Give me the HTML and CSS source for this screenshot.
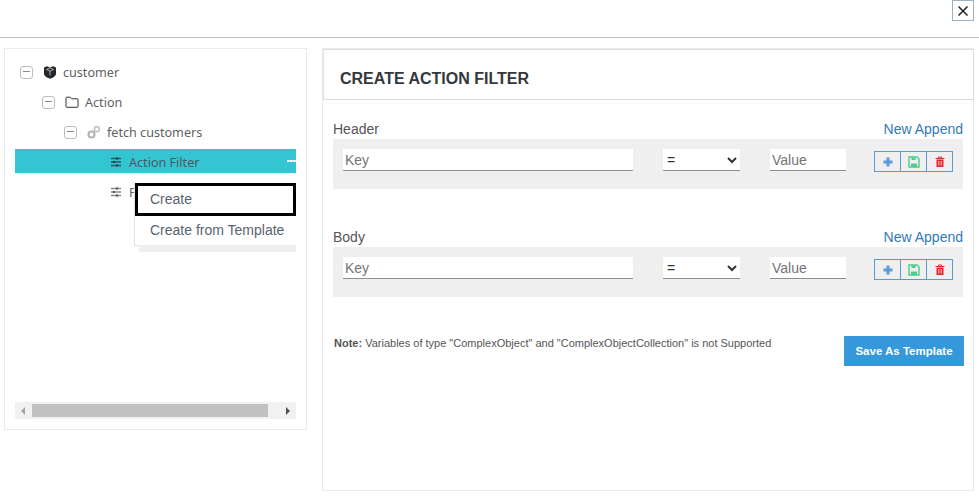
FILE: index.html
```html
<!doctype html>
<html>
<head>
<meta charset=utf-8>
<title>Create Action Filter</title>
<link rel="stylesheet" href="styles.css">
</head>

<body>

<header class="topbar">
  <button class="close" aria-label="close">
    <svg width="12" height="12" viewBox="0 0 12 12"><path d="M1.500 1.500l9 9M10.500 1.500l-9 9" stroke="#222" stroke-width="1.500" fill="none"/></svg>
  </button>
</header>

<main class="content">

<section class="tree-panel">
  <ul class="tree">
    <li class="node depth-0">
      <span class="toggle"></span>
      <svg class="icon" width="14" height="14" viewBox="0 0 14 14"><path d="M4 1.200L7 2.500l3-1.300 3 1.300v7L11 12l-4 1.800L3 12 1 9.500v-7z" fill="#23272b"/><path d="M3.500 4.500L7 6.200l3.500-1.700M7 6.200v4.300M3.500 4.500l3.500-1.500 3.500 1.500" stroke="#cfd2d4" stroke-width=".8" fill="none"/></svg>
      customer
    </li>
    <li class="node depth-1">
      <span class="toggle"></span>
      <svg class="icon" width="14" height="14" viewBox="0 0 14 14"><path d="M1 11.500V3a.800.800 0 0 1 .800-.800h3.400l1.300 1.600h5.700a.800.800 0 0 1 .800.800v6.900a.800.800 0 0 1-.800.800H1.800a.800.800 0 0 1-.800-.800z" fill="none" stroke="#333" stroke-width="1"/></svg>
      Action
    </li>
    <li class="node depth-2">
      <span class="toggle"></span>
      <svg class="icon" width="14" height="14" viewBox="0 0 14 14"><circle cx="4.500" cy="9.500" r="3" fill="none" stroke="#b5b5b5" stroke-width="2.200"/><circle cx="9.800" cy="4.200" r="2.500" fill="none" stroke="#c8c8c8" stroke-width="1.800"/></svg>
      fetch customers
    </li>
    <li class="node depth-3 selected">
      <svg class="icon slider" width="10" height="10" viewBox="0 0 10 10"><path d="M0 1.500h10M0 5h10M0 8.500h10" stroke="#2f5560" stroke-width="1.300"/><path d="M6 .500v2M3 4v2M6 7.500v2" stroke="#1d3b44" stroke-width="2"/></svg>
      Action Filter
      <span class="dots"></span>
    </li>
    <li class="node depth-3">
      <svg class="icon slider" width="10" height="10" viewBox="0 0 10 10"><path d="M0 1.500h10M0 5h10M0 8.500h10" stroke="#888" stroke-width="1.300"/><path d="M6 .500v2M3 4v2M6 7.500v2" stroke="#555" stroke-width="2"/></svg>
      F
    </li>
  </ul>

  <div class="context-menu">
    <div class="menu-item active">Create</div>
    <div class="menu-item">Create from Template</div>
  </div>

  <div class="scrollbar">
    <span class="arrow left"></span>
    <span class="thumb"></span>
    <span class="arrow right"></span>
  </div>
</section>

<section class="form-panel">
  <div class="form-title"><h2>CREATE ACTION FILTER</h2></div>

  <div class="form-body">
    <div class="group header-group">
      <div class="group-head"><span>Header</span><a href="#">New Append</a></div>
      <div class="field-row">
        <input class="key" placeholder="Key">
        <select class="op"><option>=</option></select>
        <input class="value" placeholder="Value">
        <div class="actions">
          <button><svg width="12" height="12" viewBox="0 0 12 12"><path d="M6 1.500v9M1.500 6h9" stroke="#5b9bd5" stroke-width="3"/></svg></button>
          <button><svg width="12" height="12" viewBox="0 0 12 12"><path d="M1 1h8l2 2v8H1z" fill="none" stroke="#4ecb8f" stroke-width="1.400"/><path d="M3.500 1.500h4v2.500h-4zM3 7.500h6V11H3z" fill="#4ecb8f"/></svg></button>
          <button><svg width="12" height="12" viewBox="0 0 12 12"><path d="M1.500 2.500h9M4.500 2V1h3v1" stroke="#e0282e" fill="none"/><path d="M2.500 3.500h7V11h-7z" fill="#e0282e"/><path d="M4.500 5v4.500M6 5v4.500M7.500 5v4.500" stroke="#fbb" stroke-width=".7"/></svg></button>
        </div>
      </div>
    </div>

    <div class="group body-group">
      <div class="group-head"><span>Body</span><a href="#">New Append</a></div>
      <div class="field-row">
        <input class="key" placeholder="Key">
        <select class="op"><option>=</option></select>
        <input class="value" placeholder="Value">
        <div class="actions">
          <button><svg width="12" height="12" viewBox="0 0 12 12"><path d="M6 1.500v9M1.500 6h9" stroke="#5b9bd5" stroke-width="3"/></svg></button>
          <button><svg width="12" height="12" viewBox="0 0 12 12"><path d="M1 1h8l2 2v8H1z" fill="none" stroke="#4ecb8f" stroke-width="1.400"/><path d="M3.500 1.500h4v2.500h-4zM3 7.500h6V11H3z" fill="#4ecb8f"/></svg></button>
          <button><svg width="12" height="12" viewBox="0 0 12 12"><path d="M1.500 2.500h9M4.500 2V1h3v1" stroke="#e0282e" fill="none"/><path d="M2.500 3.500h7V11h-7z" fill="#e0282e"/><path d="M4.500 5v4.500M6 5v4.500M7.500 5v4.500" stroke="#fbb" stroke-width=".7"/></svg></button>
        </div>
      </div>
    </div>

    <div class="form-foot">
      <p class="note"><strong>Note:</strong> Variables of type "ComplexObject" and "ComplexObjectCollection" is not Supported</p>
      <button class="save">Save As Template</button>
    </div>
  </div>
</section>

</main>
</body>
</html>
```

FILE: styles.css
```css
* {
  box-sizing: border-box;
}

body {
  margin: 0;
  height: 502px;
  overflow: hidden;
  background: #fff;
  font-family: "Liberation Sans", sans-serif;
  font-size: 14px;
  color: #555;
}

.topbar {
  height: 38px;
  border-bottom: 1px solid #bcbcbc;
  display: flex;
  justify-content: flex-end;
  align-items: flex-start;
  padding-right: 5px;
}

.close {
  width: 22px;
  height: 21px;
  padding: 0;
  background: #fff;
  border: 1px solid #9fb0bf;
  display: flex;
  align-items: center;
  justify-content: center;
}

.content {
  display: flex;
  align-items: flex-start;
  padding: 10px 0 0 4px;
}

/* left tree */
.tree-panel {
  position: relative;
  width: 303px;
  height: 382px;
  border: 1px solid #e6ebf0;
  padding: 8px 10px 0;
  display: flex;
  flex-direction: column;
}

.tree {
  list-style: none;
  margin: 0;
  padding: 0;
  flex: 1;
  font-family: "Noto Sans", sans-serif;
  font-size: 12.600px;
  color: #5f5f5f;
}

.node {
  height: 30px;
  display: flex;
  align-items: center;
  white-space: nowrap;
}

.depth-0 { padding-left: 5px; }
.depth-1 { padding-left: 27px; }
.depth-2 { padding-left: 49px; }
.depth-3 { padding-left: 96px; }

.toggle {
  position: relative;
  width: 13px;
  height: 13px;
  border: 1.500px solid #bdbdbd;
  border-radius: 3px;
  margin-right: 10px;
}

.toggle::after {
  content: "";
  position: absolute;
  left: 2px;
  right: 2px;
  top: 4px;
  height: 1.500px;
  background: #8a8a8a;
}

.icon {
  margin-right: 6px;
  flex: none;
}

.icon.slider {
  margin-right: 8px;
}

.selected {
  position: relative;
  background: linear-gradient(#34c5d3, #34c5d3) 0 2px / 100% 24px no-repeat;
  color: #4a5a60;
}

.dots {
  position: absolute;
  right: 0;
  top: 13px;
  width: 9px;
  height: 2px;
  background: repeating-linear-gradient(90deg, #fff 0 2px, #c8f0f4 2px 3px);
}

.context-menu {
  position: absolute;
  left: 130px;
  top: 134px;
  width: 161px;
  background: #fff;
  box-shadow: -1px 1px 1px #e4e4e4;
  font-size: 14px;
  color: #59636e;
}

.context-menu::after {
  content: "";
  position: absolute;
  left: 4px;
  right: 0;
  top: 100%;
  height: 7px;
  background: #efefef;
}

.menu-item {
  height: 29px;
  line-height: 29px;
  padding-left: 15px;
}

.menu-item.active {
  height: 33px;
  line-height: 27px;
  border: 3px solid #000;
  padding-left: 12px;
}

.scrollbar {
  height: 17px;
  margin-bottom: 10px;
  background: #f1f1f1;
  display: flex;
  align-items: center;
  padding: 0 6px;
}

.thumb {
  flex: none;
  width: 236px;
  height: 13px;
  margin-left: 7px;
  background: #c1c1c1;
}

.arrow {
  flex: none;
  width: 0;
  height: 0;
  border-top: 4px solid transparent;
  border-bottom: 4px solid transparent;
}

.arrow.left {
  border-right: 4px solid #a3a3a3;
}

.arrow.right {
  border-left: 4px solid #505050;
  margin-left: 18px;
}

/* right form */
.form-panel {
  width: 652px;
  height: 443px;
  margin-left: 15px;
  border: 1px solid #e6ebf0;
}

.form-title {
  height: 51px;
  border: 1px solid #dcdcdc;
  border-left-color: #e3e3e3;
  padding: 0 16px;
  margin-right: -1px;
  display: flex;
  align-items: center;
}

.form-title h2 {
  margin: 8px 0 0;
  font-size: 16px;
  font-weight: bold;
  color: #33383d;
}

.form-body {
  padding: 0 10px;
}

.group-head {
  height: 39px;
  display: flex;
  justify-content: space-between;
  align-items: flex-end;
  padding-bottom: 2px;
  line-height: 16px;
}

.group-head a {
  color: #337ab7;
  text-decoration: none;
}

.body-group {
  margin-top: 19px;
}

.field-row {
  height: 50px;
  background: #efefef;
  padding: 10px 10px 0;
  display: flex;
  align-items: flex-start;
}

.field-row input,
.field-row select {
  height: 22px;
  background: #fff;
  border: 0;
  border-bottom: 1px solid #8f8f8f;
  font-family: "Liberation Sans", sans-serif;
  font-size: 14px;
  border-radius: 0;
  outline: none;
}

.field-row input {
  padding: 0 2px;
}

.key { width: 290px; }
.op { width: 77px; margin-left: 30px; color: #333; }
.value { width: 76px; margin-left: 30px; }

.actions {
  display: flex;
  margin: 2px 0 0 29px;
}

.actions button {
  width: 27px;
  height: 21px;
  padding: 0;
  margin-left: -1px;
  background: transparent;
  border: 1px solid #5b9bd5;
  display: flex;
  align-items: center;
  justify-content: center;
}

.form-foot {
  display: flex;
  justify-content: space-between;
  align-items: flex-start;
  margin-top: 39px;
}

.note {
  margin: 0;
  padding-left: 1px;
  font-size: 11px;
  line-height: 14px;
}

.save {
  width: 120px;
  height: 30px;
  margin-right: -1px;
  background: #3498db;
  border: 0;
  color: #fff;
  font-family: "Liberation Sans", sans-serif;
  font-size: 11.500px;
  font-weight: bold;
}
```
